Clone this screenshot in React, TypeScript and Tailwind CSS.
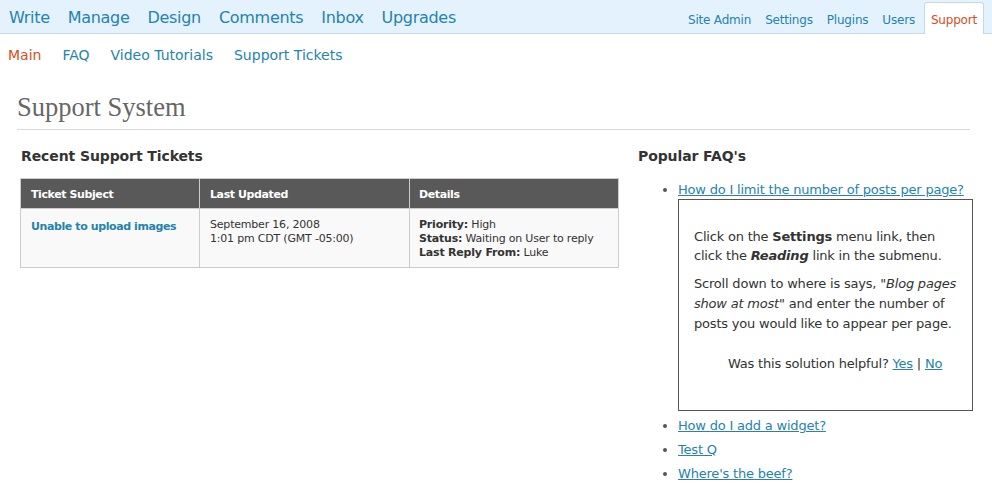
const font = { fontFamily: '"DejaVu Sans", "Liberation Sans", sans-serif' };

const mainNav = ["Write", "Manage", "Design", "Comments", "Inbox", "Upgrades"];
const adminNav = ["Site Admin", "Settings", "Plugins", "Users"];
const subNav = ["Main", "FAQ", "Video Tutorials", "Support Tickets"];

export default function App() {
  return (
    <div className="min-h-screen w-[992px] bg-white text-[#333]" style={font}>
      {/* top bar */}
      <div className="flex h-[34px] items-end justify-between border-b border-[#c6d9e9] bg-[#e4f2fd]">
        <div className="flex gap-[18px] pb-[3px] pl-[9px] text-[16px] tracking-[-0.3px] text-[#2583ad]">
          {mainNav.map((n) => (
            <span key={n}>{n}</span>
          ))}
        </div>
        <div className="flex items-end pr-[8px] text-[12px] tracking-[-0.2px] text-[#2583ad]">
          {adminNav.map((n) => (
            <span key={n} className="px-[7px] pb-[4px]">
              {n}
            </span>
          ))}
          <span className="-mb-px ml-[2px] rounded-t-[3px] border border-b-0 border-[#c6d9e9] bg-white px-[6px] pb-[5px] pt-[8px] text-[#d54e21]">
            Support
          </span>
        </div>
      </div>

      {/* sub nav */}
      <div className="flex gap-[21px] pl-[8px] pt-[11px] text-[14px] text-[#2583ad]">
        {subNav.map((n, i) => (
          <span key={n} className={i === 0 ? "text-[#d54e21]" : ""}>
            {n}
          </span>
        ))}
      </div>

      {/* page */}
      <div className="pl-[17px] pr-[22px] pt-[26px]">
        <h1
          className="border-b border-[#dadada] pb-[6px] text-[26.5px] leading-[31px] text-[#666]"
          style={{ fontFamily: '"Liberation Serif", Georgia, serif' }}
        >
          Support System
        </h1>

        <div className="flex pt-[16px]">
          <div className="w-[602px] pl-[3px]">
            <h2 className="pl-[1px] text-[14px] font-bold leading-[20px] tracking-[-0.1px] text-[#333]">
              Recent Support Tickets
            </h2>
            <table className="mt-[12px] w-[599px] border-collapse border border-[#ccc] text-[11px] tracking-[-0.2px]">
              <thead>
                <tr className="h-[30px] bg-[#595959] text-left text-white">
                  <th className="w-[179px] border border-[#ccc] pl-[10px] pt-[4px] font-bold tracking-[-0.4px]">
                    Ticket Subject
                  </th>
                  <th className="w-[210px] border border-[#ccc] pl-[10px] pt-[4px] font-bold tracking-[-0.4px]">
                    Last Updated
                  </th>
                  <th className="border border-[#ccc] pl-[9px] pt-[4px] font-bold tracking-[-0.4px]">Details</th>
                </tr>
              </thead>
              <tbody>
                <tr className="h-[59px] bg-[#f9f9f9] align-top leading-[14px]">
                  <td className="border border-[#ccc] pl-[10px] pt-[11px] font-bold tracking-[-0.4px] text-[#2583ad]">
                    Unable to upload images
                  </td>
                  <td className="border border-[#ccc] pl-[10px] pt-[9px]">
                    September 16, 2008
                    <br />
                    1:01 pm CDT (GMT -05:00)
                  </td>
                  <td className="border border-[#ccc] pl-[9px] pt-[9px]">
                    <b>Priority:</b> High
                    <br />
                    <b>Status:</b> Waiting on User to reply
                    <br />
                    <b>Last Reply From:</b> Luke
                  </td>
                </tr>
              </tbody>
            </table>
          </div>

          <div className="pl-[19px]">
            <h2 className="text-[14px] font-bold leading-[20px] tracking-[-0.1px] text-[#333]">Popular FAQ's</h2>
            <ul className="mt-[12px] list-disc pl-[40px] text-[13px] leading-[24px] tracking-[-0.2px] text-[#2583ad] marker:text-[#555]">
              <li>
                <span className="underline">How do I limit the number of posts per page?</span>
                <div className="-mt-[3px] mb-[3px] h-[212px] w-[295px] border border-[#555] px-[15px] pt-[27px] leading-[19px] text-[#333]">
                  <p>
                    Click on the <b>Settings</b> menu link, then click the <b><i>Reading</i></b> link in the submenu.
                  </p>
                  <p className="mt-[9px] leading-[20px]">
                    Scroll down to where is says, "<i>Blog pages show at most</i>" and enter the number of posts you
                    would like to appear per page.
                  </p>
                  <p className="mt-[20px] pl-[34px]">
                    Was this solution helpful? <span className="text-[#2583ad] underline">Yes</span> |{" "}
                    <span className="text-[#2583ad] underline">No</span>
                  </p>
                </div>
              </li>
              <li>
                <span className="underline">How do I add a widget?</span>
              </li>
              <li>
                <span className="underline">Test Q</span>
              </li>
              <li>
                <span className="underline">Where's the beef?</span>
              </li>
            </ul>
          </div>
        </div>
      </div>
    </div>
  );
}
